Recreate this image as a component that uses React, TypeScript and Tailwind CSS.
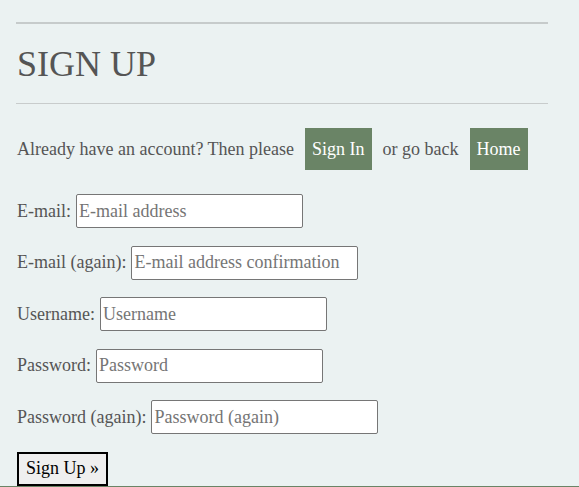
export default function App() {
  const fields = [
    { label: "E-mail:", ph: "E-mail address" },
    { label: "E-mail (again):", ph: "E-mail address confirmation" },
    { label: "Username:", ph: "Username" },
    { label: "Password:", ph: "Password" },
    { label: "Password (again):", ph: "Password (again)" },
  ];

  return (
    <div className="min-h-[487px] bg-[#ebf2f2] font-[family-name:'Liberation_Serif','Times_New_Roman',serif] text-[18px] text-[#555]">
      <div className="h-[486px] overflow-hidden">
        <div className="w-[532px] ml-[16px] pt-[22px]">
          <div className="h-[2px] bg-[#c6cbcb]" />
          <h1 className="text-[36px] leading-none pl-[1px] pt-[22px] pb-[21px]">SIGN UP</h1>
          <div className="h-px bg-[#c8cccc]" />

          <div className="flex items-center mt-[24px] pl-[1px]">
            <span>Already have an account? Then please</span>
            <a className="ml-[11px] bg-[#6a8466] text-white px-[7px] h-[42px] flex items-center">Sign In</a>
            <span className="ml-[11px]">or go back</span>
            <a className="ml-[11px] bg-[#6a8466] text-white px-[7px] h-[42px] flex items-center">Home</a>
          </div>

          <form className="mt-[24px] pl-[1px] flex flex-col gap-[17.6px]">
            {fields.map((f) => (
              <div key={f.label} className="flex items-center gap-[5px] h-[34px]">
                <label>{f.label}</label>
                <input
                  placeholder={f.ph}
                  className="w-[227px] h-[34px] bg-white border border-[#767676] rounded-[2px] px-[2px] text-[18px] placeholder:text-[#757575] outline-none"
                />
              </div>
            ))}
            <div>
              <button
                type="button"
                className="h-[34px] px-[7px] border-2 border-black bg-[#efefef] text-[18px] text-black"
              >
                Sign Up »
              </button>
            </div>
          </form>
        </div>
      </div>
      <div className="h-px bg-[#6a8466]" />
    </div>
  );
}
